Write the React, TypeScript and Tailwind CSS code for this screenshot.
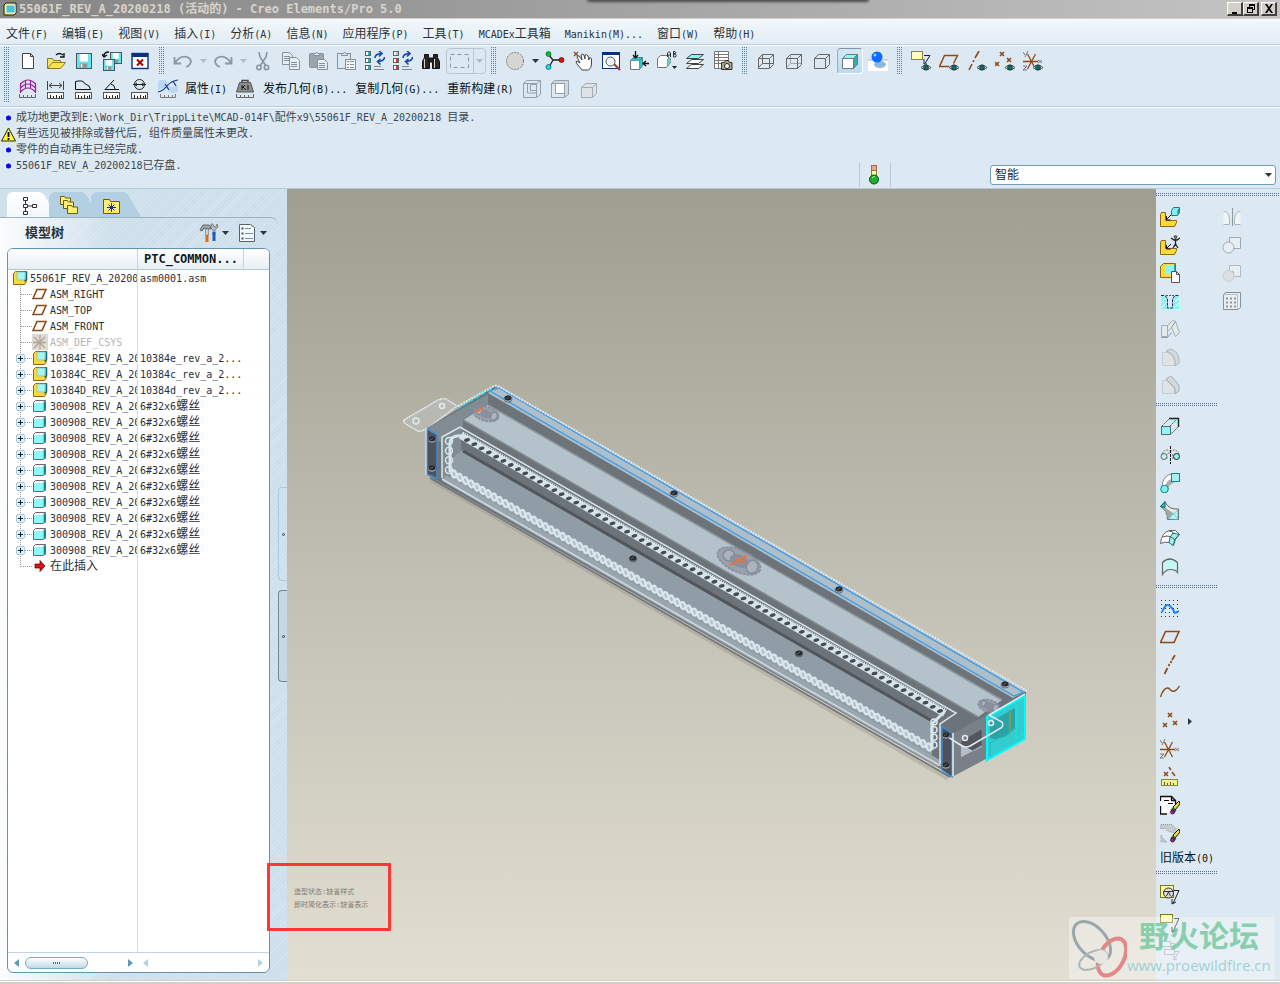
import { ReactNode } from "react";

/* ---------- text ---------- */

// CJK glyphs are drawn at the parent's size, latin runs one step smaller
const Txt = ({ children }: { children: string }) => (
  <span className="whitespace-pre">
    {children.split(/([\x20-\x7e]+)/).map((part, i) =>
      i % 2 ? (
        <span key={i} className="text-[10px]">
          {part}
        </span>
      ) : (
        part
      )
    )}
  </span>
);

/* ---------- icons, all on a 20x20 grid ---------- */

const BROWN = "#8f4a1c";

const Eye = () => (
  <g>
    <path d="M10 16.5q5-5 10 0q-5 5-10 0z" fill="#dfe5e8" stroke="#555" />
    <circle cx="15" cy="16.5" r="2.6" fill="#0a6b6b" stroke="#222" strokeWidth="0.6" />
  </g>
);

const Ruler = ({ y = 13 }: { y?: number }) => (
  <g>
    <rect x="1.5" y={y + 0.5} width="16" height="6" fill="#fff" stroke="#555" />
    <path d={`M4.5 ${y + 6}v-3M7.5 ${y + 6}v-2M10.5 ${y + 6}v-3M13.5 ${y + 6}v-2M15.5 ${y + 6}v-3`} stroke="#222" />
  </g>
);

const Disk = ({ x, y, s }: { x: number; y: number; s: number }) => (
  <g transform={`translate(${x} ${y})`}>
    <rect x="0.5" y="0.5" width={s} height={s} fill="#66e6e6" stroke="#4a5560" />
    <rect x={s * 0.25} y="1" width={s * 0.55} height={s * 0.5} fill="#fff" />
    <rect x={s * 0.25} y={s * 0.7} width={s * 0.5} height={s * 0.28} fill="#8c949a" />
    <rect x={s * 0.32} y={s * 0.75} width="1.5" height={s * 0.2} fill="#fff" />
  </g>
);

const Sync = () => (
  <g fill="none" stroke="#1845b0" strokeWidth="1.600">
    <path d="M10 7q0-4 6-4.500M14 0l3 2.500-3 3" />
    <path d="M19.500 6q0 4-6 4.500M15.500 8l-3 2.500 3 3" />
  </g>
);

const States = ({ color, top }: { color: string; top: string }) => (
  <g>
    {[top, color, color].map((c, i) => (
      <g key={i}>
        <rect x="0.5" y={0.5 + i * 7} width="5" height="4" fill={c} stroke="#566" />
        <rect x="1" y={1 + i * 7} width="2" height="3" fill="#fff" />
      </g>
    ))}
    <Sync />
    <path d="M9 15.500h7M9 18.500h10" stroke="#7d868c" />
  </g>
);

const WireCube = ({ stroke = "#666", hidden = "#666", fill = "none" }: { stroke?: string; hidden?: string; fill?: string }) => (
  <g stroke={stroke} fill="none">
    <path d="M6.500 3.500v9h11M6.500 12.500l-4 4" stroke={hidden} />
    <path d="M2.500 7.500h11v10h-11zM2.500 7.500l4-4h11v10l-4 4M13.500 7.500l4-4" fill={fill} />
  </g>
);

const Pages = () => (
  <g fill="#e6eef3" stroke="#84909a">
    <path d="M1.500 1.500h7l3 3v9h-10zM3 5.500h6M3 7.500h6M3 9.500h6" />
    <path d="M8.500 6.500h7l3 3v9h-10zM10 11.500h6M10 13.500h6M10 15.500h6" />
  </g>
);

const Clipboard = () => (
  <g>
    <rect x="0.5" y="2.500" width="14" height="14" rx="1" fill="#9aa5ad" stroke="#84909a" />
    <path d="M4.500 4.500v-2h2q1-3 2 0h2v2z" fill="#dfe8ee" stroke="#84909a" />
  </g>
);

const Points = () => (
  <path d="M8 2l4 4M12 2l-4 4M3 12l4 4M7 12l-4 4M13 10l4 4M17 10l-4 4" stroke={BROWN} strokeWidth="1.600" />
);

const Csys = () => (
  <g>
    <path d="M4.500 3l8 15M12.500 3l-8 15M0 10.500h15" stroke={BROWN} strokeWidth="1.300" />
    <path d="M0 1l2 3M5 0l-3 6M15 9l4 3M19 9l-4 3M0 15h4l-4 4h4" stroke="#777" fill="none" />
  </g>
);

const LShape = () => (
  <path d="M.5 7.500l1-2h4v8h11v2l-2 4h-14z" fill="#ffd83a" stroke="#8a6a10" />
);

const Pencil = () => (
  <g>
    <path d="M13 12l6-6 1 3-5 6z" fill="#e8d84a" stroke="#111" />
    <path d="M12.500 12.500l4 3-2 2.500-4-3z" fill="#2f6b2a" />
    <circle cx="12.500" cy="17" r="2" fill="#b010b0" stroke="#111" strokeWidth="0.700" />
  </g>
);

const NoteArrow = () => <path d="M14 5.500h5l-6 13M12 14v5l4-2" fill="none" stroke="#222" />;

const Weight = () => (
  <g>
    <path d="M7 4V1.500h6V4" fill="none" stroke="#444" strokeWidth="1.500" />
    <path d="M4.500 3.500h11l3 9.500h-17z" fill="#8b8f90" stroke="#555" />
    <path d="M7 6v5M7 9l3-3M8 8l3 3M13 6v5" stroke="#111" />
  </g>
);

const ICONS: Record<string, ReactNode> = {
  new: (
    <path d="M4.500 2.500h8l3 3v12h-11zM12.500 2.500v3h3" fill="#fff" stroke="#444" />
  ),
  open: (
    <g>
      <path d="M1.500 17.500v-10h5l1 2h7v3" fill="#f3e36a" stroke="#8c7a20" />
      <path d="M1.500 17.500l5-6h13l-5 6z" fill="#ffe34d" stroke="#8c7a20" />
      <path d="M10 4q3-3 7 0M18 2v4h-4" fill="none" stroke="#111" strokeWidth="1.300" />
    </g>
  ),
  save: <Disk x={2} y={2} s={15} />,
  backup: (
    <g>
      <Disk x={8} y={1} s={11} />
      <Disk x={1} y={8} s={11} />
      <path d="M2 5q0-4 5-4M0 3l2 3 3-2" fill="none" stroke="#111" strokeWidth="1.400" />
    </g>
  ),
  closeWin: (
    <g>
      <rect x="2" y="2.500" width="16" height="15" fill="#fff" stroke="#0a2f86" strokeWidth="1.400" />
      <rect x="2" y="2" width="16" height="4" fill="#0a2f86" />
      <path d="M7 8.500l6 6M13 8.500l-6 6" stroke="#b00000" strokeWidth="2" />
    </g>
  ),
  undo: (
    <path d="M1.500 6v6.500h6.500M2 12q5-8 12-6q5 2 3.500 6q-1 3-4.500 4" fill="none" stroke="#8b98a2" strokeWidth="1.800" />
  ),
  redo: (
    <path d="M18.500 6v6.500h-6.500M18 12q-5-8-12-6q-5 2-3.500 6q1 3 4.500 4" fill="none" stroke="#8b98a2" strokeWidth="1.800" />
  ),
  cut: (
    <g fill="none" stroke="#84909a" strokeWidth="1.500">
      <path d="M6 1l1 5 6 9M14 1l-1 5-6 9" />
      <circle cx="6" cy="16.500" r="2.200" />
      <circle cx="13.500" cy="16.500" r="2.200" />
    </g>
  ),
  copy: <Pages />,
  paste: (
    <g>
      <Clipboard />
      <path d="M8.500 8.500h7l3 3v7h-10zM10 12.500h6M10 14.500h6M10 16.500h6" fill="#e6eef3" stroke="#84909a" />
    </g>
  ),
  pasteSpecial: (
    <g>
      <rect x="0.500" y="2.500" width="13" height="15" fill="none" stroke="#84909a" />
      <path d="M4.500 4.500v-2h2q1-3 2 0h2v2z" fill="#dfe8ee" stroke="#84909a" />
      <rect x="8.500" y="8.500" width="10" height="10" fill="#f2f6f9" stroke="#84909a" />
      <path d="M10 10.500h2M10 13.500h2M10 16.500h2M13 10.500h4M13 13.500h4M13 16.500h4" stroke="#84909a" />
    </g>
  ),
  regen: <States color="#1fb5b5" top="#1fb5b5" />,
  regenMgr: <States color="#e03030" top="#b8bfc4" />,
  find: (
    <g fill="#2a2622" stroke="#111">
      <path d="M3.500 3.500h4v3l1 2v9h-7v-7l2-4zM12.500 3.500h4v3l2 4v7h-7v-9l1-2z" />
      <rect x="8" y="7" width="4" height="4" />
      <path d="M3.500 8v9M13.500 8v9" stroke="#d8d4c8" />
    </g>
  ),
  marquee: <rect x="0.500" y="3.500" width="18" height="13" fill="none" stroke="#8b98a2" strokeDasharray="4 3" />,
  sphere: <circle cx="10" cy="10" r="8.500" fill="#d6d6d4" stroke="#777" strokeDasharray="2 1" />,
  orient: (
    <g>
      <path d="M3 3l5 6h8M8 9l-4 7" fill="none" stroke="#222" strokeWidth="1.300" />
      <circle cx="3.500" cy="3" r="2.500" fill="#10c010" stroke="#064" strokeWidth="0.700" />
      <circle cx="16.500" cy="9" r="2.500" fill="#e01010" stroke="#600" strokeWidth="0.700" />
      <circle cx="3.500" cy="16" r="2.500" fill="#20d8e0" stroke="#055" strokeWidth="0.700" />
    </g>
  ),
  pan: (
    <g>
      <path d="M1 1l4 4M5 1l-4 4" stroke={BROWN} strokeWidth="1.300" />
      <path d="M9 19l-5-6q-2-3 0-3l3 2-3-6q0-2 2-1l3 4-1-5q2-2 3 0l1 4v-4q2-1 3 1l1 4 0-2q2-1 2.500 1v5q0 4-3 6z" fill="#fff" stroke="#444" />
    </g>
  ),
  zoomWin: (
    <g>
      <rect x="1.500" y="1.500" width="17" height="16" fill="#fff" stroke="#0a2f86" />
      <rect x="1" y="1" width="18" height="3" fill="#0a2f86" />
      <path d="M13 13l6 6" stroke={BROWN} strokeWidth="2.200" />
      <circle cx="9.500" cy="10.500" r="4.500" fill="#e8f4fa" stroke="#555" />
    </g>
  ),
  refit: (
    <g>
      <path d="M1.500 9.500l3-3h9v8l-3 4h-9z" fill="#fff" stroke="#777" />
      <path d="M1.500 9.500l3-3h9l-3 3zM10.500 9.500l3-3v8l-3 4z" fill="#2cc5c5" stroke="#3a8a8a" strokeWidth="0.700" />
      <path d="M6.500 0v7M4 4l2.500 3L9 4M20 12.500h-6M17 10l-3 2.500 3 2.500" fill="none" stroke="#111" strokeWidth="1.300" />
    </g>
  ),
  views: (
    <g>
      <path d="M.5 7.500l3-3h8v9l-2 3h-9z" fill="#fff" stroke="#777" />
      <path d="M10.500 8v7l3-3v-5z" fill="#5fd5d5" stroke="#777" strokeWidth="0.600" />
      <path d="M10.500 6V2q1.500-3 3 0v4M10.500 4h3M16.500 6V.5h1.500q1.500 1 0 2.500h-1.500h2q1.500 2 0 3z" fill="none" stroke="#333" />
      <path d="M15 15h5l-2.500 3z" fill="#222" />
    </g>
  ),
  layers: (
    <g stroke="#444">
      <path d="M1.500 17.500l5-4h12l-5 4z" fill="#fff" />
      <path d="M1.500 12.500l5-4h12l-5 4z" fill="#fff" />
      <path d="M1.500 7.500l5-4h12l-5 4z" fill="#8ff5f0" />
    </g>
  ),
  viewMgr: (
    <g>
      <path d="M1.500.5h14v17h-14zM1.500 3.500h14M1.500 6.500h14M1.500 9.500h14M1.500 12.500h14M5.500.5v17" fill="#fff" stroke="#777" />
      <path d="M8.500 11.500h3l1-2h3l1 2h2.500v7h-10.500z" fill="#a9a688" stroke="#333" />
      <circle cx="14" cy="15" r="2.500" fill="#fff" stroke="#222" />
    </g>
  ),
  wireframe: <WireCube />,
  hiddenLine: <WireCube hidden="#a9a9a9" />,
  noHidden: <WireCube hidden="none" />,
  shaded: (
    <g>
      <path d="M2.500 7.500h11v10h-11z" fill="#fff" stroke="#777" />
      <path d="M2.500 7.500l4-4h11l-4 4z" fill="#8ff5f0" stroke="#777" />
      <path d="M13.500 7.500l4-4v10l-4 4z" fill="#3fa8a8" stroke="#777" />
    </g>
  ),
  enhanced: (
    <g>
      <rect y="9" width="20" height="11" fill="#fff" />
      <path d="M0 9h20" stroke="#b5b5b5" />
      <ellipse cx="12" cy="13.500" rx="6" ry="3.500" fill="#8fb8dd" />
      <circle cx="9" cy="6" r="5.500" fill="#0a6cff" />
      <circle cx="7" cy="4" r="1.500" fill="#9fd0ff" />
    </g>
  ),
  noteEye: (
    <g>
      <rect x="0.500" y="0.500" width="11" height="8" fill="#ffffb5" stroke="#8a8a20" />
      <path d="M13 4.500h6l-5 8M13 8v5h3" fill="none" stroke="#222" />
      <Eye />
    </g>
  ),
  planeEye: (
    <g>
      <path d="M10 15.500H.5l5-11h13l-4 8" fill="none" stroke={BROWN} strokeWidth="1.500" />
      <Eye />
    </g>
  ),
  axisEye: (
    <g>
      <path d="M2 19l3-6M6 11l1-2M8 7l4-7" stroke={BROWN} strokeWidth="1.600" />
      <Eye />
    </g>
  ),
  pointEye: (
    <g>
      <path d="M5 1l4 4M9 1l-4 4M0 11l4 4M4 11l-4 4M12 7l4 4M16 7l-4 4" stroke={BROWN} strokeWidth="1.600" />
      <Eye />
    </g>
  ),
  csysEye: (
    <g>
      <Csys />
      <Eye />
    </g>
  ),
  curvature: (
    <g>
      <path d="M2.500 14V5q7.500-8 15 0v9M2.500 9q7.500-8 15 0M2.500 13q7.500-8 15 0M7.500 2v8M12.500 2v8" fill="none" stroke="#9a1f9a" strokeWidth="1.200" />
      <path d="M1.500 15v3.500h16V15M5.500 18v-2M9.500 18v-2M13.500 18v-2" fill="none" stroke="#666" />
    </g>
  ),
  distance: (
    <g>
      <path d="M1.500 2v9M17.500 2v9M3 6.500h13M6 4L3 6.500 6 9M13 4l3 2.500L13 9" fill="none" stroke="#444" />
      <Ruler />
    </g>
  ),
  area: (
    <g>
      <path d="M1.500 10.500V2.500q8-2 9 2 6 2 6 6z" fill="none" stroke="#111" />
      <Ruler />
    </g>
  ),
  angle: (
    <g>
      <path d="M12 1L3 10.500h14M9 5q4 1 4 5" fill="none" stroke="#111" />
      <Ruler />
    </g>
  ),
  diameter: (
    <g>
      <circle cx="9.500" cy="5.500" r="5" fill="none" stroke="#222" />
      <path d="M3 5.500h13M7 4L5 5.500 7 7M12 4l2 1.500L12 7" fill="none" stroke="#222" />
      <Ruler />
    </g>
  ),
  curveAn: (
    <g>
      <path d="M0 2q8-3 10 3t10 1v7q-8 2-10-2T0 11z" fill="#bcd6f5" />
      <path d="M0 13q5-1 9-6t11-6M7 5l4 6M15 2l3 5" fill="none" stroke="#123c90" strokeWidth="1.200" />
      <path d="M2.500 15v3.500h15V15M6.500 18v-2M10.500 18v-2M14.500 18v-2" fill="none" stroke="#777" />
    </g>
  ),
  mass: (
    <g>
      <Weight />
      <path d="M1.500 15v3.500h17V15M5.500 18v-2M9.500 18v-2M13.500 18v-2" fill="none" stroke="#666" />
    </g>
  ),
  shrink1: (
    <path d="M1.500 4.500h13v14h-13zM1.500 4.500l3-3h14v14l-4 3M14.500 4.500l4-3M5.500 5v9h9M8.500 5.500h6v6h-6z" fill="none" stroke="#95a1aa" />
  ),
  shrink2: (
    <g stroke="#95a1aa">
      <path d="M1.500 4.500l3-3h14v14l-4 3h-13z" fill="#cfd9df" />
      <path d="M1.500 4.500h13v14h-13z" fill="#dce9f2" />
      <rect x="5.500" y="4.500" width="9" height="10" fill="#fff" />
    </g>
  ),
  shrink3: (
    <g transform="translate(1 1)">
      <WireCube stroke="#a3adb4" hidden="#c8d0d5" fill="#dfe3e6" />
    </g>
  ),
  assemble: (
    <g>
      <LShape />
      <path d="M11 8l-4 4M6.500 9v4h4" fill="none" stroke="#111" />
      <path d="M11.500 3.500l2-3h6v5l-2 3h-6z" fill="#7ff2f0" stroke="#4a6a70" />
      <path d="M17.500 3.500l2-3v5l-2 3z" fill="#168f92" />
    </g>
  ),
  manikin: (
    <g>
      <LShape />
      <path d="M11 9l-4 4M6.500 10v4h4" fill="none" stroke="#111" />
      <path d="M11 3l3 2h3l3-2M15.500 4v5l-2.500 4M15.500 9l2.500 4" fill="none" stroke="#222" strokeWidth="1.300" />
      <circle cx="15.500" cy="2" r="1.500" fill="#777" stroke="#222" strokeWidth="0.600" />
    </g>
  ),
  create: (
    <g>
      <path d="M.5 3.500l3-3h12v14h-15z" fill="#ffd83a" stroke="#8a6a10" />
      <path d="M5 2h10v9H5z" fill="#8ff5f0" />
      <path d="M15 1v9" stroke="#168f92" strokeWidth="1.500" />
      <path d="M11.500 8.500h5l3 3v8h-8zM16.500 8.500v3h3" fill="#fff" stroke="#555" />
    </g>
  ),
  hole: (
    <g>
      <path d="M1 4h5l2 3v10h5V7l2-3h4v14H1z" fill="#8feeee" />
      <path d="M1 8l4-4M1 12l6-6M1 17l6-6M14 12l5-5M14 17l5-5" stroke="#fff" />
      <path d="M1 4.500h4l2.500 3.500v9h5v-9l2.500-3.500h4" fill="none" stroke="#1a2f70" strokeDasharray="3 1" />
      <path d="M6 4.500h9" stroke="#555" strokeDasharray="2 1" />
    </g>
  ),
  shell: (
    <g stroke="#a4aeb5" fill="#e3e8eb">
      <path d="M1.500 6.500h6v11h-6zM7.500 6.500l5-5 3 1 4 11-4 4-4-9-4 4z" />
      <path d="M11.500 8.500l4-6M1.500 18.500h6l4-5" fill="none" stroke="#8b98a2" />
    </g>
  ),
  round: (
    <g stroke="#adb6bc">
      <path d="M2.500 5.500h5q6 3 7 9v4h-12z" fill="#e0e3e5" stroke="#c8ced2" />
      <path d="M6 4l5-2q8 3 8 11v3l-4 3v-5q-1-7-9-10z" fill="#d3d9dd" />
    </g>
  ),
  chamfer: (
    <g stroke="#a4aeb5">
      <path d="M2.500 5.500h4l8 8v5h-12z" fill="#e0e3e5" stroke="#c8ced2" />
      <path d="M6 4l5-3 8 9v6l-4 3v-6z" fill="#d3d9dd" />
    </g>
  ),
  mirror: (
    <g>
      <path d="M1.500 4.500h2q4 3 4 7v6h-6M18.500 4.500h-2q-4 3-4 7v6h6" fill="#eef3f6" stroke="#aab4bb" />
      <path d="M10.500 1v18" stroke="#8b98a2" />
    </g>
  ),
  merge: (
    <g stroke="#9fabb3" fill="#e8eff4">
      <path d="M7.500 2.500h11v11h-11z" />
      <circle cx="6.500" cy="12.500" r="5.500" />
    </g>
  ),
  trim: (
    <g stroke="#b0b9bf">
      <path d="M7.500 2.500h11v11h-7v-5h-4z" fill="#e8eff4" />
      <circle cx="6.500" cy="13" r="5.500" fill="#dcdfe1" stroke="#c8ced2" />
    </g>
  ),
  pattern: (
    <g>
      <path d="M1.500 3.500l2-2h15v15l-2 2h-15z" fill="#e8eef2" stroke="#84909a" />
      <path d="M1.500 3.500h14v15" fill="none" stroke="#b5bfc6" />
      <path d="M4 7.500h11M4 11.500h11M4 15.500h11" stroke="#8b98a2" strokeWidth="2" strokeDasharray="2 2" />
    </g>
  ),
  extrude: (
    <g>
      <path d="M9 3l3-1.500h7V8z" fill="#a8f5f3" />
      <path d="M2 9l7-7M10 18l8-8M10 9l6-6" stroke="#555" strokeDasharray="2 1" />
      <path d="M9 1.500h9.500V10" fill="none" stroke="#222" strokeWidth="1.400" />
      <rect x="1.500" y="9.500" width="9" height="8" fill="#8ff5f3" stroke="#56707a" />
    </g>
  ),
  revolve: (
    <g>
      <path d="M10.500 1v18" stroke="#111" strokeDasharray="3 1" />
      <path d="M2 9q3-6 8-3M19 9q-3-6-8-3M7 14q-2-6 3-6M13 14q0-5-2-6" fill="none" stroke="#777" strokeDasharray="2 1" />
      <circle cx="4" cy="11.500" r="3" fill="#b5f5f3" stroke="#666" />
      <circle cx="16.500" cy="11.500" r="3" fill="#8ff5f3" stroke="#222" />
    </g>
  ),
  sweep: (
    <g>
      <path d="M2 13q1-11 10-12v8q-4 1-5 8z" fill="#fff" stroke="#888" />
      <path d="M8 17q0-5 7-8l-4-3q-5 2-6 8z" fill="#a8adb0" />
      <rect x="11.500" y="0.500" width="8" height="8" fill="#a5f0f0" stroke="#0a8a8a" />
      <circle cx="4.500" cy="16" r="3.800" fill="#7feeee" stroke="#0a8a8a" />
    </g>
  ),
  blend: (
    <g>
      <path d="M5 1q4 8 13.500 7v10.500h-11q0-9-7-13z" fill="#e6eaec" stroke="#666" />
      <path d="M4 6l9 6-5 6q0-7-7-12z" fill="#a0a5a8" />
      <path d="M8 18l10-9v9.500zM8 18l5-6 5 6" fill="#b5f5f3" stroke="#5aa" strokeWidth="0.600" />
      <path d="M.5 5.500l4.500-5v6z" fill="#2cc5c5" stroke="#066" />
    </g>
  ),
  varSweep: (
    <g>
      <path d="M.5 14.500q1-11 9-13h6l4 4q-5 4-6 11l-4-3q-5-1-9 1z" fill="#fff" stroke="#666" />
      <path d="M13 4l6 1.500q-5 4-6 11l-4-3q0-6 4-9.500z" fill="#9ff0ee" stroke="#0a7f80" />
      <path d="M3 8q6-3 12 3M9 2q4 0 5 3" fill="none" stroke="#555" />
    </g>
  ),
  boundary: (
    <path d="M2.500 17.500v-12q7-7 15 0v10q-2-3-7-3t-8 5z" fill="#c5f7f5" stroke="#666" strokeWidth="1.200" />
  ),
  style: (
    <g>
      {[1, 5, 9, 13, 17].map((y) => (
        <path key={y} d={`M1 ${y + 0.5}h18`} stroke="#10308a" strokeDasharray="1 3" />
      ))}
      <path d="M2 13q4-10 8-6t4 6 5-1" fill="none" stroke="#1080ff" strokeWidth="1.800" />
    </g>
  ),
  plane: <path d="M.5 15.500l5-11h13.500l-5 11z" fill="none" stroke={BROWN} strokeWidth="1.600" />,
  axis: <path d="M4.500 19l3-6M8.500 11l1-2M10.500 8l1-2M12 5l3-5" stroke={BROWN} strokeWidth="1.700" />,
  curve: <path d="M.5 14q3-9 7-9 2 0 3 2 4 4 9-4" fill="none" stroke={BROWN} strokeWidth="1.400" />,
  points: <Points />,
  csys: <Csys />,
  anaFeat: (
    <g>
      <path d="M4 5l4 4M8 5l-4 4M9 0l2 3M12 5l3 4" stroke={BROWN} strokeWidth="1.500" />
      <rect x="1.500" y="12.500" width="16" height="6" fill="#f5f08a" stroke="#8a8a30" />
      <path d="M4.500 18v-3M7.500 18v-2M10.500 18v-3M13.500 18v-2" stroke="#555" />
    </g>
  ),
  annot: (
    <g>
      <path d="M1 1.500h11l4 4v4l-6 7-3 2.500H.5V1.500z" fill="#fff" />
      <path d="M.5 6V1.500h11l4 4v4M7 19H.5V11M11.500 1.500v4h4" fill="none" stroke="#111" strokeWidth="1.400" />
      <path d="M4 5.500h5M8 8.500h5" stroke="#111" />
      <Pencil />
    </g>
  ),
  annotOff: (
    <g>
      <path d="M1 1.500h11l4 4v4q-8 0-11-4l-5 0zM1 12q2 4 6 7H1z" fill="#c5cbcf" stroke="#8f979c" strokeDasharray="1 1" />
      <Pencil />
    </g>
  ),
  noteDatum: (
    <g>
      <rect x="0.500" y="0.500" width="13" height="12" fill="#ffff9a" stroke="#7a7a10" />
      <circle cx="8.500" cy="8" r="5" fill="#ddd" stroke="#333" />
      <path d="M4 6.500h9M6.500 11l2-4 2 4" fill="none" stroke="#333" />
      <NoteArrow />
    </g>
  ),
  note: (
    <g>
      <rect x="0.500" y="1.500" width="12" height="8" fill="#ffffb5" stroke="#7a7a10" />
      <NoteArrow />
    </g>
  ),
  noteOff: (
    <g fill="#e4ecf1" stroke="#a4aeb5">
      <path d="M.5.500h10v5h-10zM4.500 8.500h10v5h-10z" />
      <path d="M11 2.500h4l-3 5M15 10.500h4l-5 8M14 15v4l3-1" fill="none" />
    </g>
  ),
};

const Icon = ({ name }: { name: string }) => (
  <svg width="20" height="20" viewBox="0 0 20 20" fill="none" className="shrink-0">
    {ICONS[name]}
  </svg>
);

const Tool = ({ name }: { name: string }) => (
  <button type="button" aria-label={name} className="flex h-7 w-7 shrink-0 items-center justify-center">
    <Icon name={name} />
  </button>
);

const Caret = ({ color = "#26343e" }: { color?: string }) => (
  <svg width="7" height="4" viewBox="0 0 7 4">
    <path d="M0 0h7L3.500 4z" fill={color} />
  </svg>
);

const DropCaret = ({ label, color }: { label: string; color?: string }) => (
  <button type="button" aria-label={label} className="flex h-7 w-3 shrink-0 items-center justify-center">
    <Caret color={color} />
  </button>
);

const GripV = () => (
  <div className="mx-[5px] h-full w-[5px] shrink-0 bg-[conic-gradient(from_270deg_at_1px_1px,#5b82a3_90deg,transparent_0)] bg-[length:2px_2px] first:mx-0" />
);

const GripH = ({ full }: { full?: boolean }) => (
  <div
    className={`h-[3px] shrink-0 bg-[conic-gradient(from_270deg_at_1px_1px,#5b6f8c_90deg,transparent_0)] bg-[length:2px_2px] ${
      full ? "w-full" : "w-[62px]"
    }`}
  />
);

/* ---------- title, menu, toolbars ---------- */

const TitleBar = () => (
  <header className="relative flex h-[19px] items-center overflow-hidden border-b border-[#d4d0c8] bg-gradient-to-r from-[#858585] to-[#c4c4c4] pr-[3px] pl-[3px]">
    <svg width="14" height="14" viewBox="0 0 14 14">
      <path d="M1 3l2-2h10v10l-2 2H1z" fill="#f7e95a" stroke="#222" />
      <path d="M3 3h9v8H3z" fill="#40c8d0" stroke="#eee" />
    </svg>
    <h1 className="ml-[2px] text-xs font-bold whitespace-pre text-[#d8d4cc]">
      55061F_REV_A_20200218 (活动的) - Creo Elements/Pro 5.0
    </h1>
    <div className="ml-auto flex">
      {["M4 10h5v2H4z", "M5 2h6v6H9v3H3V5h2zM6 4v1h3v2h1V4zM4 7v3h4V7z", "M3 2h2l2 3 2-3h2L8 6.500 11 11H9L7 8l-2 3H3l3-4.500z"].map((d, i) => (
        <button
          key={d}
          type="button"
          aria-label={["Minimize", "Restore", "Close"][i]}
          className="flex h-[14px] w-4 items-center justify-center border-t border-r-2 border-b-2 border-l border-t-white border-r-[#404040] border-b-[#404040] border-l-white bg-[#d4d0c8] last:ml-[2px]"
        >
          <svg width="14" height="13" viewBox="0 0 14 13" fillRule="evenodd" className="shrink-0">
            <path d={d} fill="#000" />
          </svg>
        </button>
      ))}
    </div>
    <div className="absolute -top-1 left-[588px] h-1 w-[280px] rounded shadow-[0_1px_3px_1px_#4a4a4a]" />
  </header>
);

const MENUS = [
  "文件(F)",
  "编辑(E)",
  "视图(V)",
  "插入(I)",
  "分析(A)",
  "信息(N)",
  "应用程序(P)",
  "工具(T)",
  "MCADEx工具箱",
  "Manikin(M)...",
  "窗口(W)",
  "帮助(H)",
];

const MenuBar = () => (
  <nav className="flex h-[26px] items-center gap-[14px] border-b border-[#b5cbdb] bg-gradient-to-b from-[#f2f8fb] to-[#e3ecf6] px-[6px] pt-1 text-xs text-[#2a3238]">
    {MENUS.map((m) => (
      <button key={m} type="button">
        <Txt>{m}</Txt>
      </button>
    ))}
  </nav>
);

const TextTool = ({ children }: { children: string }) => (
  <button type="button" className="h-7 shrink-0 text-xs text-[#04121c]">
    <Txt>{children}</Txt>
  </button>
);

const Toolbars = () => (
  <section className="flex h-[62px] border-t border-b border-t-white border-b-[#b5cbdb] pt-px pb-1 pl-1">
    <div className="mr-[5px] flex">
      <GripV />
    </div>
    <div className="flex flex-col">
      <div className="flex h-7 items-center">
        {["new", "open", "save", "backup", "closeWin"].map((n) => (
          <Tool key={n} name={n} />
        ))}
        <GripV />
        <Tool name="undo" />
        <DropCaret label="undo list" color="#b0bcc5" />
        <Tool name="redo" />
        <DropCaret label="redo list" color="#b0bcc5" />
        {["cut", "copy", "paste", "pasteSpecial", "regen", "regenMgr", "find"].map((n) => (
          <Tool key={n} name={n} />
        ))}
        <div className="ml-px flex h-[26px] w-10 shrink-0 items-center rounded border border-[#bcc6cc]">
          <button type="button" aria-label="select box" className="flex w-[26px] justify-center">
            <Icon name="marquee" />
          </button>
          <button type="button" aria-label="select mode" className="flex h-full flex-1 items-center justify-center border-l border-[#bcc6cc]">
            <Caret color="#b0bcc5" />
          </button>
        </div>
        <GripV />
        <Tool name="sphere" />
        <DropCaret label="display style" />
        {["orient", "pan", "zoomWin", "refit", "views", "layers", "viewMgr"].map((n) => (
          <Tool key={n} name={n} />
        ))}
        <GripV />
        {["wireframe", "hiddenLine", "noHidden"].map((n) => (
          <Tool key={n} name={n} />
        ))}
        <button
          type="button"
          aria-label="shaded"
          aria-pressed="true"
          className="mx-px flex h-[26px] w-[26px] shrink-0 items-center justify-center rounded border border-t-[#7f98a8] border-r-white border-b-white border-l-[#8fb0c8] bg-gradient-to-b from-[#d5e9f5] to-[#b5dcf3]"
        >
          <Icon name="shaded" />
        </button>
        <Tool name="enhanced" />
        <GripV />
        {["noteEye", "planeEye", "axisEye", "pointEye", "csysEye"].map((n) => (
          <Tool key={n} name={n} />
        ))}
      </div>
      <div className="flex h-7 items-center">
        {["curvature", "distance", "area", "angle", "diameter", "curveAn"].map((n) => (
          <Tool key={n} name={n} />
        ))}
        <div className="ml-[3px] flex items-center">
          <TextTool>属性(I)</TextTool>
          <div className="mx-1 flex">
            <Tool name="mass" />
          </div>
          <div className="flex gap-2">
            <TextTool>发布几何(B)...</TextTool>
            <TextTool>复制几何(G)...</TextTool>
            <TextTool>重新构建(R)</TextTool>
          </div>
        </div>
        <div className="ml-[5px] flex">
          <Tool name="shrink1" />
          <Tool name="shrink2" />
          <Tool name="shrink3" />
        </div>
      </div>
    </div>
  </section>
);

/* ---------- message area ---------- */

const MESSAGES = [
  { text: "成功地更改到E:\\Work_Dir\\TrippLite\\MCAD-014F\\配件x9\\55061F_REV_A_20200218 目录." },
  { text: "有些远见被排除或替代后, 组件质量属性未更改.", warn: true },
  { text: "零件的自动再生已经完成." },
  { text: "55061F_REV_A_20200218已存盘." },
];

const MessageArea = () => (
  <section className="flex justify-between border-t border-b border-t-white border-b-[#b5cbdb]">
    <ul className="pt-[2px] pb-[14px] text-[11px] leading-4 text-[#3c4650]">
      {MESSAGES.map((m) => (
        <li key={m.text} className="flex h-4 items-center">
          <span className="flex w-4 shrink-0 justify-end">
            {m.warn ? (
              <svg width="15" height="15" viewBox="0 0 15 15">
                <path d="M7.500 1L14.500 14H.5z" fill="#ffff20" stroke="#222" />
                <path d="M7.500 5v5M7.500 11v2" stroke="#000" strokeWidth="1.800" />
              </svg>
            ) : (
              <svg width="16" height="6" viewBox="0 0 16 6">
                <circle cx="8.500" cy="3" r="2.500" fill="#0000f5" />
              </svg>
            )}
          </span>
          <Txt>{m.text}</Txt>
        </li>
      ))}
    </ul>
    <div className="flex items-end pr-1 pb-px">
      <div className="mr-[99px] flex h-6 w-8 items-center justify-center border-r border-l border-[#b9cad6]">
        <svg width="10" height="20" viewBox="0 0 10 20" className="-ml-[2px]">
          <rect x="2.500" y="0.500" width="5" height="5" fill="#f0a090" stroke="#a06a60" />
          <rect x="2.500" y="5.500" width="5" height="5" fill="#ffff90" stroke="#80803a" />
          <circle cx="5" cy="14.500" r="4.500" fill="#20b030" stroke="#0a4a10" />
          <path d="M3 13l3-2" stroke="#b5f5b5" />
        </svg>
      </div>
      <div className="relative mb-[2px]">
        <select
          aria-label="过滤器"
          className="block h-5 w-[286px] appearance-none rounded-[3px] border border-[#6f9db8] bg-white pl-1 text-xs leading-4 text-[#20282e]"
        >
          <option>智能</option>
        </select>
        <span className="pointer-events-none absolute top-2 right-1">
          <Caret />
        </span>
      </div>
    </div>
  </section>
);

/* ---------- model tree ---------- */

type Row = { kind: "root" | "plane" | "csys" | "asm" | "part" | "insert"; name: string; common?: string };

const ROWS: Row[] = [
  { kind: "root", name: "55061F_REV_A_20200", common: "asm0001.asm" },
  { kind: "plane", name: "ASM_RIGHT" },
  { kind: "plane", name: "ASM_TOP" },
  { kind: "plane", name: "ASM_FRONT" },
  { kind: "csys", name: "ASM_DEF_CSYS" },
  { kind: "asm", name: "10384E_REV_A_20", common: "10384e_rev_a_2..." },
  { kind: "asm", name: "10384C_REV_A_20", common: "10384c_rev_a_2..." },
  { kind: "asm", name: "10384D_REV_A_20", common: "10384d_rev_a_2..." },
  ...Array.from({ length: 10 }, (): Row => ({ kind: "part", name: "300908_REV_A_20", common: "6#32x6螺丝" })),
  { kind: "insert", name: "在此插入" },
];

const AsmGlyph = () => (
  <g>
    <path d="M1.500 3.500l2-2h11v10l-2 3h-11z" fill="#ffd83a" stroke="#8a6a10" />
    <path d="M5 2h8v8H5z" fill="#a5f5f5" stroke="#6ab" strokeWidth="0.500" />
    <path d="M12.500 11.500l2-2v-8" stroke="#0a6a70" fill="none" strokeWidth="1.500" />
  </g>
);

const NODE_ICON: Record<Row["kind"], ReactNode> = {
  root: <AsmGlyph />,
  asm: <AsmGlyph />,
  plane: <path d="M1 12.500l4-9h9l-4 9z" fill="none" stroke={BROWN} strokeWidth="1.600" />,
  csys: (
    <g>
      <rect width="16" height="16" fill="#dcdad6" />
      <path d="M8 1v14M2 3l11 11M13 3L2 14M1 8.500h13" stroke="#b0a892" strokeWidth="1.300" />
    </g>
  ),
  part: (
    <g>
      <path d="M1.500 4.500l2-2h10v9l-2 2h-10z" fill="#fff" stroke="#667" />
      <path d="M2 5h9v8H2z" fill="#8ff8f8" />
      <path d="M12.500 13V3.500" stroke="#0a8a8a" strokeWidth="2" />
    </g>
  ),
  insert: <path d="M3 6h5V2.500l5 5.500-5 5.500V10H3z" fill="#e01010" stroke="#500" strokeWidth="0.700" />,
};

const Guide = ({ expandable, last }: { expandable: boolean; last: boolean }) => (
  <svg width="16" height="16" viewBox="0 0 16 16" className="shrink-0">
    <path d={last ? "M4.500 0v8.500" : "M4.500 0v16"} stroke="#9a9a9a" strokeDasharray="1 1" />
    <path d="M5 8.500h11" stroke="#9a9a9a" strokeDasharray="1 1" />
    {expandable && (
      <g>
        <rect x="0.500" y="4.500" width="8" height="8" rx="1.500" fill="#e3f0f8" stroke="#a5c8de" />
        <path d="M2 8.500h5M4.500 6v5" stroke="#10202c" />
      </g>
    )}
  </svg>
);

const TreeTable = () => (
  <table className="w-full table-fixed border-separate border-spacing-0 text-xs leading-4 text-[#2a3038]">
    <colgroup>
      <col className="w-[130px]" />
      <col className="w-[106px]" />
      <col />
    </colgroup>
    <thead>
      <tr className="bg-gradient-to-b from-white to-[#e6eff5]">
        <th className="border-r border-b border-r-[#c5d5df] border-b-[#b0c6d4] p-0" />
        <th className="border-r border-b border-r-[#c5d5df] border-b-[#b0c6d4] p-0 pl-[6px] text-left font-bold text-[#10181e]">
          <div className="h-5 leading-5">PTC_COMMON...</div>
        </th>
        <th className="border-b border-[#b0c6d4] p-0" />
      </tr>
    </thead>
    <tbody>
      {ROWS.map((row, i) => (
        <tr key={i}>
          <td className="p-0">
            <div className={`flex h-4 w-[129px] items-center overflow-hidden ${row.kind === "root" ? "pl-1" : "pl-2"}`}>
              {row.kind !== "root" && (
                <Guide expandable={row.kind === "asm" || row.kind === "part"} last={row.kind === "insert"} />
              )}
              <svg width="16" height="16" viewBox="0 0 16 16" className="shrink-0">
                {NODE_ICON[row.kind]}
              </svg>
              <span className={`ml-[2px] ${row.kind === "csys" ? "text-[#b5b5b5]" : ""}`}>
                <Txt>{row.name}</Txt>
              </span>
            </div>
          </td>
          <td colSpan={2} className="p-0">
            <div className="flex h-4 items-center pl-[2px]">{row.common && <Txt>{row.common}</Txt>}</div>
          </td>
        </tr>
      ))}
    </tbody>
  </table>
);

const ScrollArrow = ({ left, dim }: { left?: boolean; dim?: boolean }) => (
  <svg width="5" height="8" viewBox="0 0 5 8" className="shrink-0">
    <path d={left ? "M5 0v8L0 4z" : "M0 0v8l5-4z"} fill={dim ? "#b5d0de" : "#5f98b5"} />
  </svg>
);

const Tab = ({ active, label, children }: { active?: boolean; label: string; children: ReactNode }) => (
  <button
    type="button"
    role="tab"
    aria-selected={!!active}
    aria-label={label}
    className={`flex h-full w-[50px] items-center justify-center rounded-tl-md pr-2 [clip-path:polygon(0_0,66%_0,74%_10%,100%_100%,0_100%)] ${
      active ? "bg-gradient-to-b from-white to-[#f3f8fb]" : "-ml-2 bg-[#b3cfe2]"
    }`}
  >
    <svg width="20" height="20" viewBox="0 0 20 20" fill="none">
      {children}
    </svg>
  </button>
);

const Folder = ({ x, y }: { x: number; y: number }) => (
  <path
    transform={`translate(${x} ${y})`}
    d="M.5 8.500v-8h4l1 1.500h5v6.500z"
    fill="#ffef70"
    stroke="#6a5c14"
  />
);

const Navigator = () => (
  <aside className="flex w-[287px] shrink-0 bg-[repeating-linear-gradient(135deg,#cddfeb_0_2px,#d7e5ee_2px_3px)]">
    <div className="flex w-[278px] flex-col">
      <div role="tablist" className="flex h-[28px] shrink-0 pt-[3px] pl-[7px]">
        <Tab active label="模型树">
          <path d="M5.500 2.500h4v3h-4zM5.500 9.500h4v3h-4zM5.500 16.500h4v3h-4zM14.500 9.500h4v3h-4zM7.500 5.500v4M7.500 12.500v4M9.500 11h5" fill="#fff" stroke="#333" />
        </Tab>
        <Tab label="文件夹">
          <Folder x={0} y={1} />
          <Folder x={3} y={5} />
          <Folder x={7} y={10} />
        </Tab>
        <Tab label="收藏夹">
          <path d="M1.500 18.500v-14h6l1 2h9v12z" fill="#ffef70" stroke="#6a5c14" />
          <path d="M9.500 8v9M5 12.500h9M6.500 9.500l6 6M12.500 9.500l-6 6" stroke="#0a2fc0" />
        </Tab>
      </div>
      <div className="flex flex-1 flex-col rounded-tr-lg border-t border-[#9fb4c0] bg-[linear-gradient(to_right,#fbfdfe,#fbfdfe00_110px)] pr-2 pb-[7px] pl-[7px]">
        <div className="flex h-[30px] items-center pr-px pl-[18px]">
          <h2 className="text-[13px] font-bold text-[#2a343c]">模型树</h2>
          <div className="ml-auto flex items-center">
            <button type="button" aria-label="settings">
              <svg width="20" height="20" viewBox="0 0 20 20">
                <path d="M1 7l3-5h6l2 2v2H8L5 5 3 8z" fill="#9aa5ac" stroke="#444" strokeWidth="0.700" />
                <path d="M6.500 6h3v6h-3z" fill="#c8d0d4" stroke="#666" strokeWidth="0.500" />
                <path d="M6.500 12h3v7h-3z" fill="#e06a10" />
                <path d="M12 1v4l2 2v5h2V7l3-3-1-3-1 3h-2l-1-3z" fill="#b5bdc2" stroke="#555" strokeWidth="0.600" />
                <path d="M13.500 9h3v9h-3z" fill="#1a5fc0" />
              </svg>
            </button>
            <DropCaret label="settings menu" />
            <button type="button" aria-label="show" className="ml-[6px]">
              <svg width="20" height="20" viewBox="0 0 20 20" fill="none">
                <path d="M2.500 1.500h11l4 3v14h-15z" fill="#f4f8fc" stroke="#56616a" />
                <path d="M4.500 5.500h2M4.500 10.500h2M4.500 15.500h2" stroke="#456" strokeWidth="2" />
                <path d="M8 5.500h6M8 10.500h8M8 15.500h8" stroke="#6f93b8" />
              </svg>
            </button>
            <DropCaret label="show menu" />
          </div>
        </div>
        <div className="flex flex-1 flex-col overflow-hidden rounded-md border border-[#6495b0] bg-white">
          <div className="flex-1 bg-[linear-gradient(to_right,transparent_129px,#d2e1ea_129px,#d2e1ea_130px,transparent_130px)]">
            <TreeTable />
          </div>
          <div className="flex h-5 shrink-0 items-center border-t border-[#c0d5e1]">
            <div className="flex w-[130px] items-center justify-between pr-[5px] pl-[6px]">
              <ScrollArrow left />
              <div className="mr-auto ml-[6px] flex h-3 w-[63px] items-center justify-center rounded-full border border-[#7fa9c2] bg-gradient-to-b from-white to-[#c2d8e6]">
                <div className="h-[2px] w-2 bg-[repeating-linear-gradient(to_right,#4a7088_0_1px,transparent_1px_2px)]" />
              </div>
              <ScrollArrow />
            </div>
            <div className="flex flex-1 items-center justify-between pr-[6px] pl-[5px]">
              <ScrollArrow left dim />
              <ScrollArrow dim />
            </div>
          </div>
        </div>
      </div>
    </div>
    <div className="flex w-[9px] flex-col justify-center gap-[9px]">
      <div className="flex h-[94px] items-center justify-center rounded-l border border-r-0 border-[#a9cade]">
        <span className="h-[3px] w-[3px] rounded-full border border-[#34434e]" />
      </div>
      <div className="flex h-[92px] items-center justify-center rounded-l border border-r-0 border-[#6f8796] bg-[#c5d8e5]">
        <span className="h-[3px] w-[3px] rounded-full border border-[#34434e]" />
      </div>
    </div>
  </aside>
);

/* ---------- 3D model ---------- */

const lerp = (a: number, b: number, t: number) => a + (b - a) * t;

const along = (x1: number, y1: number, x2: number, y2: number, n: number) =>
  Array.from({ length: n }, (_, i) => [lerp(x1, x2, i / (n - 1)), lerp(y1, y2, i / (n - 1))]);

const Screw = ({ x, y, dim }: { x: number; y: number; dim?: boolean }) => (
  <g>
    <ellipse cx={x} cy={y + 1} rx="4" ry="3" fill={dim ? "#6f767c" : "#c5d0d7"} stroke={dim ? "#555b60" : "#333"} strokeWidth="0.600" />
    <ellipse cx={x} cy={y} rx="3.300" ry="2.600" fill="#26282b" />
    <path d={`M${x - 2} ${y + 1}l3-2`} stroke="#777" strokeWidth="0.800" />
  </g>
);

const Knob = ({ x, y, rx, ry, rot }: { x: number; y: number; rx: number; ry: number; rot: number }) => (
  <g transform={`rotate(${rot} ${x} ${y})`} fill="none" stroke="#878b99">
    <ellipse cx={x} cy={y} rx={rx} ry={ry} fill="#9096a3" fillOpacity="0.750" strokeWidth="1.500" strokeDasharray="3 1" />
    <ellipse cx={x - rx / 2} cy={y - 1} rx={rx / 4} ry={ry * 0.500} fill="#a9b4be" strokeWidth="1.500" />
    <ellipse cx={x + rx / 1.600} cy={y} rx={rx / 4} ry={ry * 0.600} fill="#a9b4be" strokeWidth="1.500" />
    <ellipse cx={x} cy={y} rx={rx / 2.500} ry={ry * 0.500} fill="#8b90a0" />
  </g>
);

const Model = () => (
  <svg width="641" height="411" viewBox="401 379 641 411" fill="none" className="shrink-0">
    {/* soft shadow under the long side */}
    <path d="M432 480L948 778" stroke="#8f8d82" strokeOpacity="0.350" strokeWidth="5" />
    {/* left bracket */}
    <path d="M404 420L438 400q4-2 8-1l11 7-29 22-6 3q-3 1-6-1l-10-6q-3-2-2-4z" fill="#b8bab1" stroke="#e0eaf0" strokeWidth="1.500" strokeDasharray="2 0.600" />
    <circle cx="442" cy="406" r="2.500" stroke="#e0eaf0" strokeWidth="1.500" />
    <circle cx="416" cy="421" r="3" stroke="#e0eaf0" strokeWidth="1.500" />
    {/* body */}
    <path d="M427 428L495 386 1026 692v46L953 776 427 475z" fill="#6c7379" />
    <path d="M427 428L488 394v12l-25 13v12l-21 6v6l-15-9z" fill="#818b93" />
    {/* flange */}
    <path d="M488 393L499 386 1026 691 1013 698z" fill="#aebfca" />
    <path d="M488 405L1002 700 978 717 463 420z" fill="#b3c2cb" />
    <path d="M490 391L499 388 1023 692 1014 696z" stroke="#3d9be8" strokeWidth="1.300" />
    <path d="M458 406L494 386q3-1 6 1L1027 691" stroke="#dfe9ee" strokeWidth="2" strokeDasharray="2 1" />
    <path d="M457 409L493 388" stroke="#22dfe5" strokeWidth="1.300" strokeDasharray="5 2" />
    <path d="M463 420L978 717" stroke="#7f888e" strokeWidth="1.500" />
    <path d="M488 405L1002 700" stroke="#8f999f" strokeWidth="1.500" />
    {/* window */}
    <path d="M447 458l16-8L932 720v36L447 478z" fill="#919da6" />
    <path d="M463 451L932 721" stroke="#50565c" strokeWidth="3" />
    <path d="M442 437l19-10v24l-10 8v18l-9 2z" fill="#7f8a92" />
    {/* bottom rim */}
    <path d="M444 478L940 764" stroke="#9aa6ae" strokeWidth="7" />
    <path d="M442 479L941 766" stroke="#cfdae0" strokeWidth="1.500" />
    <path d="M430 478L950 777" stroke="#70737c" strokeWidth="1.500" />
    <path d="M442 478V437L460 427 956 713 940 724v40" stroke="#dbe6ec" strokeWidth="1.500" />
    {/* upper perforated gasket */}
    <path d="M461 435L945 713" stroke="#d6e4ec" strokeWidth="8" />
    <path d="M464 433L948 711" stroke="#4d5359" strokeWidth="1" strokeDasharray="1 1.500" />
    {along(467, 440, 940, 711, 66).map(([x, y], i) => (
      <ellipse key={i} cx={x} cy={y} rx="3" ry="1.700" transform={`rotate(-15 ${x} ${y})`} fill="#454b51" />
    ))}
    {/* chain around the remaining sides */}
    <path d="M463 436q-12-1-13 6v29L932 748v-24l9-9" stroke="#d6e4ec" strokeWidth="3" />
    {along(454, 474, 929, 747, 84).map(([x, y], i) => (
      <ellipse key={i} cx={x} cy={y} rx="2.300" ry="3.600" fill="#b0bec8" stroke="#d9e6ee" strokeWidth="2.200" transform={`rotate(-20 ${x} ${y})`} />
    ))}
    {along(449, 441, 449, 470, 4).map(([x, y], i) => (
      <ellipse key={i} cx={x} cy={y} rx="3.500" ry="3.500" stroke="#d9e6ee" strokeWidth="1.500" />
    ))}
    {along(934, 722, 934, 745, 4).map(([x, y], i) => (
      <ellipse key={i} cx={x} cy={y} rx="3" ry="3" stroke="#d9e6ee" strokeWidth="1.500" />
    ))}
    {/* knobs */}
    <Knob x={486} y={414} rx={13} ry={7} rot={15} />
    <path d="M476 412l7-4" stroke="#f07030" strokeWidth="2" />
    <Knob x={739} y={561} rx={23} ry={11} rot={24} />
    <path d="M730 565l17-9M735 558l10 5" stroke="#f07030" strokeWidth="1.800" />
    <Knob x={989} y={706} rx={11} ry={6} rot={15} />
    {/* left end plate */}
    <path d="M427 429l10 6v43l-10-4z" fill="#4e525a" stroke="#2f93ea" strokeWidth="1.300" />
    <path d="M426 428v47" stroke="#dfe9ee" />
    {/* right end */}
    <path d="M952 734L987 715v43L952 777z" fill="#7a8088" />
    <path d="M961 741l21-12v16l-21 12z" fill="#50565c" stroke="#8e8a9c" strokeDasharray="1 1" />
    <path d="M961 746l13 5 8-4v-1l-21 11z" fill="#b0bfca" />
    <path d="M961 744l12 7-12 6z" fill="#b0bfca" />
    <path d="M942 727l10 6v44l-10-7z" fill="#4e525a" stroke="#2f93ea" strokeWidth="1.300" />
    <path d="M953 733v43" stroke="#e5eef3" strokeWidth="1.500" />
    {/* cyan cover */}
    <path d="M987 717l38-21v43l-38 21z" fill="#33cdd0" />
    <path d="M990 722l25-14v20q-12 14-25 10z" fill="#2aa3a6" />
    <path d="M1010 712v21" stroke="#7a9c62" strokeWidth="2" />
    <path d="M1016 704v34l9-5" stroke="#18e5e8" />
    <path d="M990 757v-14l26-15" stroke="#22b8bb" />
    <path d="M987 717l38-21v43l-38 21z" stroke="#00fbff" strokeWidth="2" />
    {/* right bracket */}
    <path d="M948 737l14 9q4 2 8 0l31-18q3-3 1-6l-13-7 36-21" stroke="#e3edf2" strokeWidth="1.500" />
    <circle cx="965" cy="738" r="2.500" stroke="#e3edf2" strokeWidth="1.500" />
    <circle cx="991" cy="723" r="2.500" stroke="#e3edf2" strokeWidth="1.500" />
    {[
      [508, 398],
      [674, 493],
      [839, 589],
      [1005, 684],
      [432, 439],
      [432, 468],
      [946, 735],
      [946, 765],
    ].map(([x, y]) => (
      <Screw key={`${x}-${y}`} x={x} y={y} />
    ))}
    <Screw x={633} y={558} dim />
    <Screw x={799} y={653} dim />
  </svg>
);

const Viewport = () => (
  <main className="relative flex min-w-0 flex-1 items-center justify-center bg-gradient-to-b from-[#a09e90] via-[#c2c0b4] to-[#e2dfd2]">
    <Model />
    <div className="absolute bottom-[49px] -left-5 h-[68px] w-[124px] border-3 border-[#fa3838] pt-5 pl-6 text-[7px] leading-[13px] whitespace-nowrap text-[#7f7c70]">
      <p>造型状态:缺省样式</p>
      <p>即时简化表示:缺省表示</p>
    </div>
  </main>
);

/* ---------- right feature toolbar ---------- */

const Column = ({ names }: { names: string[] }) => (
  <div className="flex flex-col">
    {names.map((n) => (
      <Tool key={n} name={n} />
    ))}
  </div>
);

const FeatureBar = () => (
  <aside className="flex w-[124px] shrink-0 flex-col pt-1">
    <GripH full />
    <div className="mt-[7px] mb-1 flex gap-[34px]">
      <Column names={["assemble", "manikin", "create", "hole", "shell", "round", "chamfer"]} />
      <Column names={["mirror", "merge", "trim", "pattern"]} />
    </div>
    <GripH />
    <div className="mt-[7px] mb-1">
      <Column names={["extrude", "revolve", "sweep", "blend", "varSweep", "boundary"]} />
    </div>
    <GripH />
    <div className="mt-[7px] flex items-end">
      <Column names={["style", "plane", "axis", "curve", "points", "csys", "anaFeat", "annot", "annotOff"]} />
      <button type="button" aria-label="points menu" className="mb-28 flex h-7 w-3 items-center justify-center">
        <svg width="4" height="7" viewBox="0 0 4 7">
          <path d="M0 0v7l4-3.500z" fill="#2a3a44" />
        </svg>
      </button>
    </div>
    <div className="flex h-6 items-center pb-[2px] pl-1 text-xs text-[#04121c]">
      <button type="button">
        <Txt>旧版本(0)</Txt>
      </button>
    </div>
    <GripH />
    <div className="mt-[7px]">
      <Column names={["noteDatum", "note", "noteOff"]} />
    </div>
  </aside>
);

const Watermark = () => (
  <div className="pointer-events-none absolute right-[5px] bottom-px flex h-[62px] w-[206px] bg-white/35">
    <svg width="58" height="62" viewBox="0 0 58 62" fill="none" className="shrink-0" opacity="0.750">
      <ellipse cx="23" cy="24" rx="14" ry="23" transform="rotate(-42 23 24)" stroke="#7f929c" strokeWidth="3" />
      <ellipse cx="43" cy="40" rx="12" ry="20" transform="rotate(28 43 40)" stroke="#e06868" strokeWidth="4" />
      <ellipse cx="24" cy="43" rx="15" ry="8" transform="rotate(-28 24 43)" stroke="#98a5aa" strokeWidth="2" />
      <circle cx="32" cy="40" r="7" fill="#e6e6e0" />
    </svg>
    <div className="flex flex-col whitespace-nowrap">
      <span className="pt-1 pl-3 text-[30px] leading-8 font-bold text-[#6fc79c]/80">野火论坛</span>
      <span className="font-['Open_Sans',sans-serif] text-[15px] leading-6 text-[#9fd0d8]">www.proewildfire.cn</span>
    </div>
  </div>
);

const App = () => (
  <div className="flex min-h-screen flex-col bg-[#dce9f2] [font-family:'DejaVu_Sans_Mono','Noto_Sans_CJK_SC',monospace]">
    <TitleBar />
    <MenuBar />
    <Toolbars />
    <MessageArea />
    <div className="relative flex flex-1">
      <Navigator />
      <Viewport />
      <FeatureBar />
      <Watermark />
    </div>
    <footer className="h-1 border-t border-b-2 border-[#d4d0c8] bg-white" />
  </div>
);

export default App;
